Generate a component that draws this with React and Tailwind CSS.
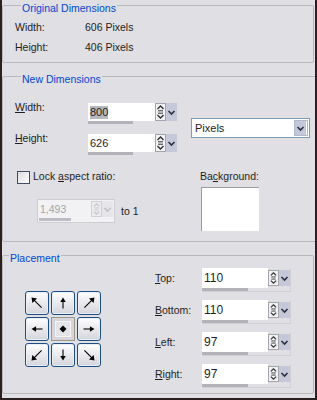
import React from 'react';

function UpDown({ disabled }) {
  const c = disabled ? '#c2c2c6' : '#303030';
  return (
    <div className={`flex h-full w-[11px] flex-col border ${disabled ? 'border-[#d0d0d4] bg-[#ececef]' : 'border-[#a4a4ac] bg-[#f2f2f5]'}`}>
      <svg viewBox="0 0 9 8" className="h-1/2 w-full">
        <path d="M1.5 5 L4.5 2 L7.5 5" fill="none" stroke={c} strokeWidth="1.4" />
        <path d="M2 6.8 H7" stroke={c} strokeWidth="1" />
      </svg>
      <svg viewBox="0 0 9 8" className="h-1/2 w-full">
        <path d="M2 1.2 H7" stroke={c} strokeWidth="1" />
        <path d="M1.5 3 L4.5 6 L7.5 3" fill="none" stroke={c} strokeWidth="1.4" />
      </svg>
    </div>
  );
}

function DropBtn({ disabled }) {
  const c = disabled ? '#c2c2c6' : '#2a3040';
  return (
    <div className={`flex h-full w-[11px] items-center justify-center ${disabled ? 'bg-[#e6e6ea]' : 'bg-[#c5c8d9]'}`}>
      <svg viewBox="0 0 9 9" className="h-[9px] w-[9px]">
        <path d="M1.5 3 L4.5 6 L7.5 3" fill="none" stroke={c} strokeWidth="1.6" />
      </svg>
    </div>
  );
}

function SpinField({ value, selected }) {
  return (
    <div className="flex flex-col">
      <div className="flex h-[18px]">
        <div className="flex w-[67px] items-center bg-white pl-[2px] text-[11px]">
          <span className={selected ? 'bg-[#b8b8bc] leading-[13px]' : 'leading-[13px]'}>{value}</span>
        </div>
        <UpDown />
        <DropBtn />
      </div>
      <div className="h-[3px] w-[45px] bg-[#b2b2ba]" />
    </div>
  );
}

function PlaceField({ value }) {
  return (
    <div className="flex flex-col border-b border-r border-[#cfcfd4]">
      <div className="flex h-[20px]">
        <div className="flex w-[66px] items-center bg-white pl-[2px] text-[12px]">{value}</div>
        <div className="py-[2px]"><UpDown /></div>
        <div className="py-[2px]"><DropBtn /></div>
      </div>
      <div className="h-[3px] w-[46px] bg-[#b2b2ba]" />
    </div>
  );
}

function Arrow({ dir }) {
  const shapes = {
    nw: { line: 'M17 17 L8 8', head: 'M6 6 L12 7 L7 12 Z' },
    n: { line: 'M12 18 L12 9', head: 'M12 6 L15 11 L9 11 Z' },
    ne: { line: 'M7 17 L16 8', head: 'M18 6 L17 12 L12 7 Z' },
    w: { line: 'M18 12 L9 12', head: 'M6 12 L11 9 L11 15 Z' },
    e: { line: 'M6 12 L15 12', head: 'M18 12 L13 9 L13 15 Z' },
    sw: { line: 'M17 7 L8 16', head: 'M6 18 L7 12 L12 17 Z' },
    s: { line: 'M12 6 L12 15', head: 'M12 18 L9 13 L15 13 Z' },
    se: { line: 'M7 7 L16 16', head: 'M18 18 L12 17 L17 12 Z' },
  };
  if (dir === 'c') {
    return (
      <div className="flex h-[24px] w-[24px] items-center justify-center border border-[#9c9890] bg-[#d6d5da]">
        <div className="flex h-[16px] w-[16px] items-center justify-center border border-[#f4f4f6] bg-[#e4e4e8]">
          <svg viewBox="0 0 8 8" className="h-[8px] w-[8px]">
            <path d="M4 0.5 L7.5 4 L4 7.5 L0.5 4 Z" fill="#000" />
          </svg>
        </div>
      </div>
    );
  }
  const s = shapes[dir];
  return (
    <div className="h-[24px] w-[24px] rounded-[3px] border border-[#1f4f82] bg-gradient-to-b from-white to-[#d4d4dc] shadow-[inset_0_0_0_1px_#e8eef6]">
      <svg viewBox="0 0 24 24" className="h-full w-full">
        <path d={s.line} stroke="#000" strokeWidth="1.2" />
        <path d={s.head} fill="#000" />
      </svg>
    </div>
  );
}

function U({ children }) {
  return <span className="underline underline-offset-[1px]">{children}</span>;
}

function Legend({ children }) {
  return (
    <legend className="ml-[6px] h-[7px] px-[1px] leading-[13px] text-[#0046d5]">{children}</legend>
  );
}

export default function App() {
  return (
    <div className="h-[400px] w-[317px] overflow-hidden border-b-2 border-l-2 border-r-2 border-[#2c1f20] bg-[#e0dfe3] pr-[1px] pt-[2px] font-['Liberation_Sans',Arial,sans-serif] text-[10.5px] text-[#1e1e1e]">
      {/* Original Dimensions */}
      <fieldset className="rounded-[2px] border border-[#b8b8bd] px-[12px] pb-[8px] pt-[12px]">
        <Legend>Original Dimensions</Legend>
        <div className="grid grid-cols-[70px_1fr] gap-y-[7px] leading-[13px]">
          <span>Width:</span>
          <span>606 Pixels</span>
          <span>Height:</span>
          <span>406 Pixels</span>
        </div>
      </fieldset>

      {/* New Dimensions */}
      <fieldset className="mt-[10px] rounded-[2px] border border-[#b8b8bd] px-[12px] pb-[10px]">
        <Legend>New Dimensions</Legend>
        <div className="flex items-start">
          <div className="flex flex-col">
            <div className="mt-[21px] flex items-start">
              <span className="w-[73px] leading-[13px]"><U>W</U>idth:</span>
              <div className="mt-[2px]"><SpinField value="800" selected /></div>
            </div>
            <div className="mt-[8px] flex items-start">
              <span className="w-[73px] leading-[13px]"><U>H</U>eight:</span>
              <div className="mt-[2px]"><SpinField value="626" /></div>
            </div>
          </div>
          <div className="ml-[14px] mt-[38px] flex h-[20px] w-[119px] border border-[#7f9db9] bg-white p-[1px]">
            <span className="flex-1 pl-[2px] text-[11px] leading-[16px]">Pixels</span>
            <div className="w-[14px] border border-[#b0b8cc]"><DropBtn /></div>
          </div>
        </div>

        <div className="mt-[15px] flex items-start">
          <div className="flex w-[185px] flex-col">
            <div className="flex items-start">
              <div className="ml-[2px] mt-[1px] h-[13px] w-[13px] border border-[#3d4f66] bg-gradient-to-br from-[#dcdcdc] to-white" />
              <span className="ml-[3px] leading-[13px]">Lock <U>a</U>spect ratio:</span>
            </div>
            <div className="ml-[22px] mt-[15px] flex items-center">
              <div className="flex flex-col border border-[#cdcdd2] bg-[#f2f2f4] p-[1px]">
                <div className="flex h-[16px]">
                  <span className="w-[52px] pl-[1px] leading-[16px] text-[#a4a4a8]">1,493</span>
                  <UpDown disabled />
                  <DropBtn disabled />
                </div>
                <div className="mt-[1px] h-[3px] w-[32px] bg-[#bcbcc4]" />
              </div>
              <span className="ml-[6px] leading-[13px]">to 1</span>
            </div>
          </div>
          <div className="flex flex-col">
            <span className="leading-[13px]">Ba<U>c</U>kground:</span>
            <div className="ml-[1px] mt-[4px] h-[44px] w-[58px] border-l border-t border-[#9c9ca0] bg-white" />
          </div>
        </div>
      </fieldset>

      {/* Placement */}
      <fieldset className="mt-[10px] rounded-[2px] border border-[#b8b8bd] pb-[5px]">
        <Legend>Placement</Legend>
        <div className="flex items-start pl-[22px]">
          <div className="mt-[32px] grid w-[130px] grid-cols-[repeat(3,24px)] gap-x-[2px] gap-y-[2px]">
            <Arrow dir="nw" />
            <Arrow dir="n" />
            <Arrow dir="ne" />
            <Arrow dir="w" />
            <Arrow dir="c" />
            <Arrow dir="e" />
            <Arrow dir="sw" />
            <Arrow dir="s" />
            <Arrow dir="se" />
          </div>
          <div className="flex flex-col gap-y-[8px] pt-[9px]">
            {[
              ['T', 'op:', '110'],
              ['B', 'ottom:', '110'],
              ['L', 'eft:', '97'],
              ['R', 'ight:', '97'],
            ].map(([k, rest, v]) => (
              <div key={k + rest} className="flex items-start">
                <span className="w-[47px] leading-[20px]"><U>{k}</U>{rest}</span>
                <PlaceField value={v} />
              </div>
            ))}
          </div>
        </div>
      </fieldset>
    </div>
  );
}
